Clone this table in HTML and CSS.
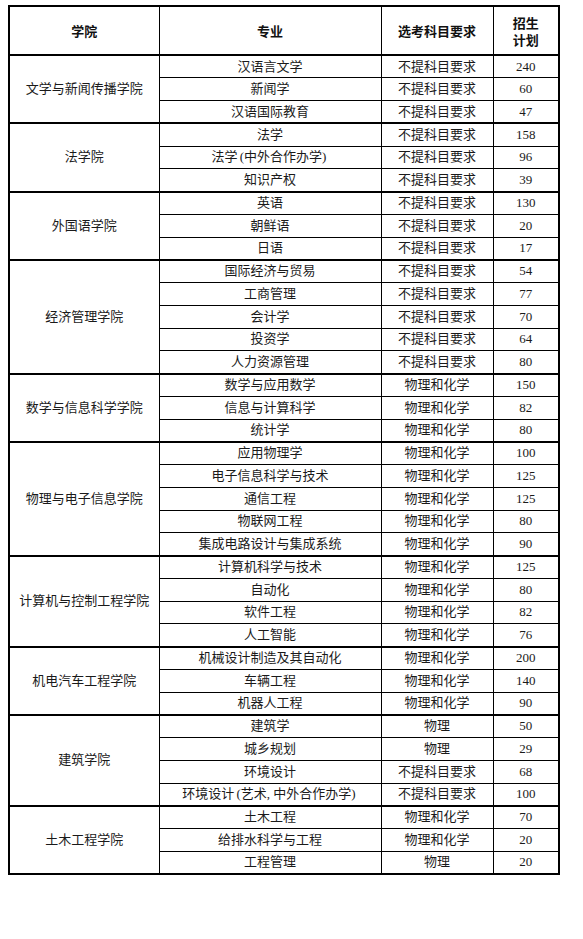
FILE: index.html
```html
<!DOCTYPE html>
<html lang="zh-CN">
<head>
<meta charset="utf-8">
<link rel="stylesheet" href="styles.css">
</head>
<body>
<table class="plan">
  <colgroup>
    <col class="c-college"><col class="c-major"><col class="c-req"><col class="c-num">
  </colgroup>
  <thead>
    <tr class="head"><th>学院</th><th>专业</th><th>选考科目要求</th><th>招生<br>计划</th></tr>
  </thead>
  <tbody>
    <tr class="grp"><td rowspan="3">文学与新闻传播学院</td><td>汉语言文学</td><td>不提科目要求</td><td>240</td></tr>
    <tr><td>新闻学</td><td>不提科目要求</td><td>60</td></tr>
    <tr><td>汉语国际教育</td><td>不提科目要求</td><td>47</td></tr>

    <tr class="grp"><td rowspan="3">法学院</td><td>法学</td><td>不提科目要求</td><td>158</td></tr>
    <tr><td>法学<span class="po">(</span>中外合作办学<span class="pc">)</span></td><td>不提科目要求</td><td>96</td></tr>
    <tr><td>知识产权</td><td>不提科目要求</td><td>39</td></tr>

    <tr class="grp"><td rowspan="3">外国语学院</td><td>英语</td><td>不提科目要求</td><td>130</td></tr>
    <tr><td>朝鲜语</td><td>不提科目要求</td><td>20</td></tr>
    <tr><td>日语</td><td>不提科目要求</td><td>17</td></tr>

    <tr class="grp"><td rowspan="5">经济管理学院</td><td>国际经济与贸易</td><td>不提科目要求</td><td>54</td></tr>
    <tr><td>工商管理</td><td>不提科目要求</td><td>77</td></tr>
    <tr><td>会计学</td><td>不提科目要求</td><td>70</td></tr>
    <tr><td>投资学</td><td>不提科目要求</td><td>64</td></tr>
    <tr><td>人力资源管理</td><td>不提科目要求</td><td>80</td></tr>

    <tr class="grp"><td rowspan="3">数学与信息科学学院</td><td>数学与应用数学</td><td>物理和化学</td><td>150</td></tr>
    <tr><td>信息与计算科学</td><td>物理和化学</td><td>82</td></tr>
    <tr><td>统计学</td><td>物理和化学</td><td>80</td></tr>

    <tr class="grp"><td rowspan="5">物理与电子信息学院</td><td>应用物理学</td><td>物理和化学</td><td>100</td></tr>
    <tr><td>电子信息科学与技术</td><td>物理和化学</td><td>125</td></tr>
    <tr><td>通信工程</td><td>物理和化学</td><td>125</td></tr>
    <tr><td>物联网工程</td><td>物理和化学</td><td>80</td></tr>
    <tr><td>集成电路设计与集成系统</td><td>物理和化学</td><td>90</td></tr>

    <tr class="grp"><td rowspan="4">计算机与控制工程学院</td><td>计算机科学与技术</td><td>物理和化学</td><td>125</td></tr>
    <tr><td>自动化</td><td>物理和化学</td><td>80</td></tr>
    <tr><td>软件工程</td><td>物理和化学</td><td>82</td></tr>
    <tr><td>人工智能</td><td>物理和化学</td><td>76</td></tr>

    <tr class="grp"><td rowspan="3">机电汽车工程学院</td><td>机械设计制造及其自动化</td><td>物理和化学</td><td>200</td></tr>
    <tr><td>车辆工程</td><td>物理和化学</td><td>140</td></tr>
    <tr><td>机器人工程</td><td>物理和化学</td><td>90</td></tr>

    <tr class="grp"><td rowspan="4">建筑学院</td><td>建筑学</td><td>物理</td><td>50</td></tr>
    <tr><td>城乡规划</td><td>物理</td><td>29</td></tr>
    <tr><td>环境设计</td><td>不提科目要求</td><td>68</td></tr>
    <tr><td>环境设计<span class="po">(</span>艺术<span class="pc">,</span>中外合作办学<span class="pc">)</span></td><td>不提科目要求</td><td>100</td></tr>

    <tr class="grp"><td rowspan="3">土木工程学院</td><td>土木工程</td><td>物理和化学</td><td>70</td></tr>
    <tr><td>给排水科学与工程</td><td>物理和化学</td><td>20</td></tr>
    <tr><td>工程管理</td><td>物理</td><td>20</td></tr>
  </tbody>
</table>
</body>
</html>
```

FILE: styles.css
```css
html, body {
  background: #ffffff;
}
body {
  margin: 5px 8px;
  font-family: "Liberation Serif", "Noto Sans CJK SC", serif;
  color: #1a1a1a;
}
.plan {
  border-collapse: collapse;
  table-layout: fixed;
  width: 550px;
  border: 2px solid #000;
}
.c-college { width: 150px; }
.c-major { width: 222px; }
.c-req { width: 112px; }
.c-num { width: 66px; }
.plan th,
.plan td {
  border: 1px solid #000;
  padding: 0;
  text-align: center;
  vertical-align: middle;
  font-size: 13px;
  line-height: 16px;
  white-space: nowrap;
}
.plan th {
  font-family: "Noto Sans CJK SC", sans-serif;
  font-weight: bold;
  line-height: 17px;
  color: #111;
}
.head {
  height: 49px;
}
.head th {
  border-bottom-width: 2px;
}
.plan tbody tr {
  height: 22.75px;
}
.plan tbody tr.grp td {
  border-top-width: 2px;
}
.po,
.pc {
  display: inline-block;
  width: 6.5px;
}
.po {
  text-align: right;
}
.pc {
  text-align: left;
}
```
